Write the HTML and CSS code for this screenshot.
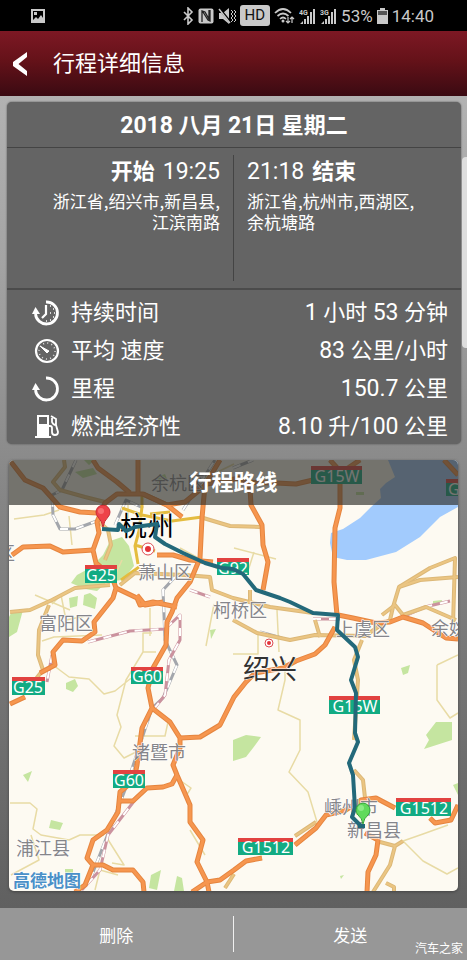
FILE: index.html
```html
<!DOCTYPE html>
<html lang="zh-CN">
<head>
<meta charset="utf-8">
<meta name="viewport" content="width=device-width, initial-scale=1">
<title>行程详细信息</title>
<link rel="stylesheet" href="styles.css">
</head>
<body>
<div class="status">
  <svg class="status-photo" width="16" height="16" viewBox="0 0 16 16"><path fill="#c9c9c9" fill-rule="evenodd" d="M1 1h14v14H1zM3 3v9l3-3 2 2 3-4 2 3V3zM4 4h3v3H4z"/></svg>
  <div class="status-right">
    <svg width="12" height="18" viewBox="0 0 12 18"><path d="M2 5l8 8-4 4V1l4 4-8 8" fill="none" stroke="#c9c9c9" stroke-width="1.6"/></svg>
    <svg width="16" height="16" viewBox="0 0 16 16"><rect x="0.500" y="0.500" width="15" height="15" rx="2" fill="#c9c9c9"/><path d="M4 14V3l3 1 4 7V2M12 2v11l-2-1-5-8" fill="none" stroke="#222" stroke-width="1.300"/></svg>
    <svg width="18" height="18" viewBox="0 0 18 18"><path fill="#c9c9c9" d="M1 6h4l6-5v16l-6-5H1z"/><path d="M1 1l12 15" stroke="#000" stroke-width="2.5"/><path d="M1 2l11 14" stroke="#c9c9c9" stroke-width="1.4"/><path d="M13 3l2 2-2 2 2 2-2 2 2 2-2 2M16 3l2 2-2 2 2 2-2 2 2 2-2 2" fill="none" stroke="#c9c9c9"/></svg>
    <span class="hd">HD</span>
    <svg width="21" height="18" viewBox="0 0 21 18"><g fill="none" stroke="#c9c9c9" stroke-width="1.7"><path d="M1 6q8-8 16 0M3.500 9q5.500-5 11 0M6 12q3-3 6 0"/><path d="M14 10v6m-2-2l2 2 2-2M18 16v-6m-2 2l2-2 2 2" stroke-width="1.200"/></g><circle cx="9" cy="14" r="1.500" fill="#c9c9c9"/></svg>
    <svg width="17" height="18" viewBox="0 0 17 18"><text x="0" y="8" class="net">4G</text><path fill="#c9c9c9" d="M1 17l3-3v3zM5 12h2v5H5zM8 9h2v8H8zM11 5h2v12h-2zM14 2h2v15h-2z"/></svg>
    <svg width="17" height="18" viewBox="0 0 17 18"><text x="0" y="8" class="net">3G</text><path fill="#c9c9c9" d="M1 17l3-3v3zM5 12h2v5H5zM8 9h2v8H8zM11 5h2v12h-2zM14 2h2v15h-2z"/></svg>
    <span>53%</span>
    <svg width="11" height="16" viewBox="0 0 11 16"><path fill="#c9c9c9" d="M3 0h5v2h3v14H0V2h3z"/><path fill="#555" d="M1 3h9v4H1z"/></svg>
    <span>14:40</span>
  </div>
</div>

<header class="header">
  <button class="back" type="button" aria-label="返回"><svg width="18" height="26" viewBox="0 0 18 26"><path d="M15 1v5L6.500 13l8.500 7v5L1 15v-4z" fill="#fff"/></svg></button>
  <h1>行程详细信息</h1>
</header>

<main class="content">
  <section class="card">
    <h2 class="date"><span class="num">2018</span> 八月 <span class="num">21</span>日 星期二</h2>
    <div class="trip">
      <div class="leg leg-start">
        <p class="when"><b>开始</b> <span class="num">19:25</span></p>
        <p>浙江省,绍兴市,新昌县,<br>江滨南路</p>
      </div>
      <div class="leg leg-end">
        <p class="when"><span class="num">21:18</span> <b>结束</b></p>
        <p>浙江省,杭州市,西湖区,<br>余杭塘路</p>
      </div>
    </div>
    <dl class="stats">
      <div class="stat">
        <dt><svg width="28" height="26" viewBox="0 0 28 26"><path d="M14 2a11 11 0 1 1-10.500 12" fill="none" stroke="#fff" stroke-width="2.800"/><path d="M0 14l3.500-7L8 14z" fill="#fff"/><path d="M14 5v9l-4 4" fill="none" stroke="#fff" stroke-width="2.200"/><path d="M18 6h1M21 9h1M22 13h1M21 17h1M18 20h1M14 21h1M18 13h1" stroke="#fff" stroke-width="1.500"/></svg>持续时间</dt>
        <dd><span class="num">1</span> 小时 <span class="num">53</span> 分钟</dd>
      </div>
      <div class="stat">
        <dt><svg width="28" height="26" viewBox="0 0 28 26"><circle cx="15" cy="13" r="11" fill="none" stroke="#fff" stroke-width="2.200"/><circle cx="15" cy="13" r="8" fill="none" stroke="#ddd" stroke-width="1.600" stroke-dasharray="1 3.190"/><path d="M8 8l9 5-2 2z" fill="#fff" stroke="#fff"/></svg>平均 速度</dt>
        <dd><span class="num">83</span> 公里<span class="num">/</span>小时</dd>
      </div>
      <div class="stat">
        <dt><svg width="28" height="26" viewBox="0 0 28 26"><path d="M14 2a11 11 0 1 1-10.500 12" fill="none" stroke="#fff" stroke-width="2.800"/><path d="M0 14l3.500-7L8 14z" fill="#fff"/></svg>里程</dt>
        <dd><span class="num">150.7</span> 公里</dd>
      </div>
      <div class="stat">
        <dt><svg width="28" height="26" viewBox="0 0 28 26"><path fill="#fff" fill-rule="evenodd" d="M5 1h12v21h2v2H3v-2h2zM7 3v7h8V3z"/><path d="M17 12h1q2 0 2 2v4q0 3 3 3t3-3l-2-7V5l-5-3M20 4v4q1 3 4 3" fill="none" stroke="#fff" stroke-width="1.800"/></svg>燃油经济性</dt>
        <dd><span class="num">8.10</span> 升<span class="num">/100</span> 公里</dd>
      </div>
    </dl>
  </section>

  <section class="map">
    <svg class="map-canvas" viewBox="9 460 449 431" role="img" aria-label="行程路线">
      <defs>
        <g id="highways">
          <path d="M11 462L25 480L43 488L60 507L80 512L97 513"/>
          <path d="M93 460L98 468L117 482L130 493M138 460V493"/>
          <path d="M182 517L167 505L143 494H117L105 503L97 522L99 533L93 550L96 563L112 577L116 588L113 598L94 622L95 632L82 641L63 640L53 652L55 665L40 673M25 697L10 704"/>
          <path d="M12 555L23 547L50 546L63 552L93 550"/>
          <path d="M116 588L137 598L140 605L153 602L177 607"/>
          <path d="M220 460L205 485L202 518L200 558L190 582L177 598L172 612L167 622L166 645L153 668L148 688L152 708L142 728L137 765L134 780L120 792L118 812L107 830L93 840L87 858L93 865L85 885L75 892"/>
          <path d="M152 708L170 722L180 738V748L173 765L177 775L190 805V822L203 840L197 862L207 882L209 892"/>
          <path d="M177 775L172 784L163 787L147 788L133 801H120"/>
          <path d="M93 865L103 865L113 870H133L143 882L144 892"/>
          <path d="M180 738L200 737L220 725L234 697L246 682L255 673L283 668L296 661L315 654L325 645L335 627"/>
          <path d="M192 892L207 882L220 880L234 870L246 861L262 858M295 845L316 828L326 815L346 810L361 800L376 798L395 808"/>
          <path d="M430 818L435 823L451 820L458 805M365 833L378 840L376 855L368 872L367 892"/>
          <path d="M330 460L340 471V508L335 528L334 582L337 615M360 460L348 468"/>
          <path d="M143 494L167 505L185 502L207 484L240 478L250 488L251 505L262 525L263 545L268 562L263 590M240 482L276 483L296 484L313 480"/>
          <path d="M157 555H173L190 560L213 562M338 615L353 618L376 623L390 622L403 617L423 623L446 638L458 639"/>
          <path d="M444 460L458 475M137 595L145 605L163 602"/>
        </g>
        <g id="roads">
          <path d="M64 460L65 467L53 482L60 490L85 497L105 502M49 605L39 630L38 655L43 670L35 680"/>
          <path d="M10 612L30 610L52 600L75 588L110 585M105 560L111 545L108 530L97 520"/>
          <path d="M120 585L135 573L185 575L210 577L212 590L233 598L270 607L313 613"/>
          <path d="M233 620L257 633L290 640L315 635L365 636L378 627L390 620L393 607L399 587L430 568L455 558L453 625"/>
          <path d="M399 587L420 580L458 577M382 615L395 605L403 615L426 607L456 620"/>
          <path d="M315 620L320 637M362 640L354 660L358 680L354 740M354 770L363 780L365 798"/>
          <path d="M295 836L316 822M380 842L395 846L390 865L373 892M395 846L403 841M386 883L394 887V892"/>
          <path d="M200 517L230 526L260 527M250 590V602M225 888L234 874"/>
        </g>
        <path id="railgrey" d="M76 460L62 490L52 495L53 515L60 529L75 529L105 518M115 525L126 500L143 508M175 577L163 590L165 640L177 665L163 698L152 708L125 790L90 880M183 510L215 460M260 632L282 638M233 468L253 460"/>
        <path id="railpink" d="M88 642L130 631L165 629L180 615L180 640L169 660L165 695L153 710M190 590L210 597M52 655L47 682M138 796L108 835L100 870L80 892M313 619L340 619M395 620L425 607L450 601"/>
      </defs>
      <path class="land" d="M9 460h449v431H9z"/>
      <g class="green">
        <path d="M103 555l7-14 12-4 7 9 5 20-11 14-16 2-10 9-12-2-14-6 6-8 13-7z"/>
        <path d="M69 598l9-2-1 10-7 2zM84 595l6-2 7 5-2 11-12-4zM11 613l12-3-6 22-8 5v-20zM66 683l9-4 3 7-5 6-7-3zM210 630l6-1-5 10zM23 775l9-4-4 11zM51 820l12 3-3 7-11-2zM151 875l10-5-4 20-8-2zM177 876l5 2 2 13h-10zM65 869h8v4h-8z"/>
        <path d="M233 740l13-5 15 2-8 11-7 9-13 4zM426 735l10-13h16v18l-28 9 5-9zM401 668l9-3-2 8-5 2zM453 785l5-2v12zM340 876l4-1-3 4zM75 472l18-4 4 6-14 4zM356 492h8v3h-8zM157 477l8-3 2 5-10 4zM84 460h11l-6 5zM13 612l8-1zM433 601l9-1-1 5h-8z"/>
      </g>
      <path class="water" d="M388 460L395 477L386 483L380 489L381 498L371 507L360 518L343 529L331 533L330 543L333 557L347 560L366 560L396 552L420 537L440 517L458 507V460z"/>
      <path class="lane" d="M14 519l30-4 15-5M69 516l3 29M52 604l9-9 5 25 24-5M42 641l12-4 48-2M53 665l16 12 20 2 15 15 11-3 15-12 19-4M122 560l-9 20M152 633h-9v19l-17 28-9 35 4 12-7 19 10 12 18-9M143 652l13 0M10 803h20l7 6-4 20 8 6 28 5 11-5h24M31 835l8 25-28 15M107 838l17 27-12-2M95 890l5-20 18 5M135 736h30l3-14M150 608v28M234 548l42 11M254 552l-7 22M258 634v20h-25M277 610l2 42M285 660v20l-7 30 22 10v30l-11 22 19 20 9 30M437 665v35l13 18 8-5M403 841l20 20 24 13 11-6M403 841l20-7 25-9M190 830l15 25M178 779l13 9-5 8M180 548l40 22M35 595l35 15M214 604l-8 42M201 480l33-16M128 505v20M437 665l21-10"/>
      <use href="#railgrey" class="rail-grey"/><use href="#railgrey" class="rail-gap"/>
      <use href="#railpink" class="rail-pink"/><use href="#railpink" class="rail-gap"/>
      <path class="yellow" d="M142 492v15l-3 24-4 15 3 18M122 508l20 7 30 6 30-4M121 580l18-13M150 514l20-2M135 545l20 6"/>
      <use href="#roads" class="road-edge"/><use href="#roads" class="road"/>
      <use href="#highways" class="highway-edge"/><use href="#highways" class="highway"/>
      <g class="place">
        <text x="151" y="490">余杭区</text><text x="138" y="579">萧山区</text><text x="39" y="630">富阳区</text><text x="213" y="617">柯桥区</text><text x="336" y="636">上虞区</text><text x="431" y="635">余姚</text><text x="132" y="759">诸暨市</text><text x="16" y="855">浦江县</text><text x="324" y="814">嵊州市</text><text x="347" y="837">新昌县</text><text x="-3" y="560">区</text>
      </g>
      <text class="city city-main" x="120" y="536">杭州</text><text class="city" x="243" y="679">绍兴</text>
      <g class="spot"><circle cx="148" cy="549" r="6"/><circle cx="269" cy="643" r="4"/></g>
      <g class="spot-core"><circle cx="148" cy="549" r="3"/><circle cx="269" cy="643" r="2"/></g>
      <g class="shield">
        <path d="M85 565h32v18H85zM12 678h33v17H12zM131 667h32v17h-32zM113 770h32v18h-32zM217 558h32v17h-32zM311 466h51v18h-51zM329 696h51v18h-51zM396 798h55v18h-55zM238 838h55v17h-55zM446 479h12v17h-12z"/>
      </g>
      <path class="shield-top" d="M85 565h32v4H85zM12 677h33v4H12zM131 667h32v4h-32zM113 770h32v4h-32zM217 558h32v4h-32zM311 466h51v4h-51zM329 696h51v4h-51zM396 798h55v4h-55zM238 838h55v4h-55zM446 479h12v4h-12z"/>
      <g class="shield-text">
        <text x="101" y="581">G25</text><text x="28" y="693">G25</text><text x="147" y="682">G60</text><text x="129" y="786">G60</text><text x="233" y="574">G92</text><text x="337" y="482">G15W</text><text x="355" y="712">G15W</text><text x="424" y="814">G1512</text><text x="266" y="853">G1512</text><text x="463" y="495">G92</text>
      </g>
      <path class="route" d="M102 529L118 530L119 524L126 531L135 527L157 524L155 537L165 544L183 553L205 563L222 568L233 569L243 574L256 590L280 598L290 602L313 613L338 615L337 630L355 647L358 657L351 680L356 693L355 733L358 742L349 763L353 775L355 808L352 817L361 826"/>
      <path d="M358 824h7v4h-7z" fill="#1f6878"/>
      <path d="M103 527q-1-6-5-10a7 7 0 1 1 10 0q-4 4-5 10z" fill="#ee4248" stroke="#c92c35"/>
      <circle cx="101" cy="511" r="3" fill="#ff8c8c" opacity=".6"/>
      <path d="M363 824q-1-6-5-9a7 7 0 1 1 10 0q-4 3-5 9z" fill="#61da5c" stroke="#37a43a"/>
      <circle cx="361" cy="808" r="3" fill="#a9f5a2" opacity=".6"/>
      <text class="brand" x="13" y="887">高德地图</text>
    </svg>
    <h2 class="map-title">行程路线</h2>
  </section>
  <span class="scrollbar"></span>
</main>

<footer class="footer">
  <button type="button">删除</button>
  <button type="button">发送</button>
  <span class="watermark">汽车之家</span>
</footer>
</body>
</html>
```
FILE: styles.css
```css
* { box-sizing: border-box; }

body {
  margin: 0;
  min-height: 100vh;
  display: flex;
  flex-direction: column;
  font-family: Roboto, "Noto Sans CJK SC", sans-serif;
  font-size: 22px;
  color: #fff;
  background: #777;
}

h1, h2, p, dl, dd { margin: 0; }

svg { display: block; flex: none; }

button {
  padding: 0;
  border: 0;
  background: none;
  color: inherit;
  font: inherit;
}

.status {
  height: 31px;
  padding: 0 33px 0 30px;
  display: flex;
  align-items: center;
  justify-content: space-between;
  background: #000;
  color: #c9c9c9;
  font-size: 17px;
}

.status-right {
  display: flex;
  align-items: center;
  gap: 4px;
}

.hd {
  padding: 0 5px;
  border-radius: 3px;
  background: #c9c9c9;
  color: #111;
  font-size: 15px;
  line-height: 21px;
}

.net {
  font: bold 7px Roboto, sans-serif;
  fill: #c9c9c9;
}

.header {
  height: 65px;
  padding-left: 12px;
  display: flex;
  align-items: center;
  gap: 23px;
  background: linear-gradient(#7d1824, #651219 45%, #3a0a12);
}

.header h1 {
  font-size: 22px;
  font-weight: 400;
  line-height: 30px;
}

.content {
  position: relative;
  flex: 1;
  padding: 6px 6px 17px 7px;
  background: linear-gradient(#b2b2b2, #a4a4a4 20%, #858585 50%, #606060);
}

.card {
  border-radius: 5px;
  background: #646464;
  box-shadow: 0 0 2px #4a4a4a;
}

.num { font-size: 23px; }

.date {
  height: 46px;
  border-bottom: 1px solid #444;
  font-size: 22px;
  line-height: 48px;
  text-align: center;
}

.trip {
  display: grid;
  grid-template-columns: 1fr 1fr;
  height: 140px;
  padding: 7px 0;
  font-family: "Noto Sans CJK SC", sans-serif;
  font-size: 17px;
  line-height: 21px;
}

.leg { padding: 0 13px; }

.leg-start {
  border-right: 1px solid #444;
  text-align: right;
}

.leg-start .when { justify-content: flex-end; }

.when {
  display: flex;
  gap: 8px;
  margin-bottom: 1px;
  font-family: Roboto, "Noto Sans CJK SC", sans-serif;
  font-size: 22px;
  line-height: 34px;
}

.stats {
  display: grid;
  gap: 8px;
  padding: 8px 13px 2px 25px;
  border-top: 2px solid #4b4b4b;
}

.stat {
  display: flex;
  justify-content: space-between;
  line-height: 30px;
}

.stat dt {
  display: flex;
  align-items: center;
  gap: 11px;
}

.map {
  position: relative;
  margin: 16px 3px 0 2px;
  overflow: hidden;
  border-radius: 5px;
  box-shadow: 0 1px 3px #444;
}

.map-canvas {
  width: 100%;
  height: auto;
}

.map-title {
  position: absolute;
  inset: 0 0 auto;
  background: rgba(50, 50, 45, .68);
  font-size: 22px;
  line-height: 45px;
  text-align: center;
}

.land { fill: #fdfaf2; }
.green { fill: #c5e5a0; }
.water { fill: #a2cbfd; }

.lane, .yellow, .road, .road-edge, .highway, .highway-edge,
.rail-grey, .rail-pink, .rail-gap, .route {
  fill: none;
  stroke-linejoin: round;
}

.lane { stroke: #e8dba5; stroke-width: 1.5; }
.yellow { stroke: #e4bc3f; stroke-width: 3; }
.road-edge { stroke: #dcb878; stroke-width: 4; }
.road { stroke: #ebc582; stroke-width: 2; }
.highway-edge { stroke: #e5853f; stroke-width: 5; }
.highway { stroke: #f6964f; stroke-width: 3; }
.rail-grey { stroke: #a3a6ac; stroke-width: 3; }
.rail-pink { stroke: #cb929e; stroke-width: 3; }
.rail-gap { stroke: #fff; stroke-width: 2; stroke-dasharray: 8 8; }
.route { stroke: #23697a; stroke-width: 4; }

.place {
  font-size: 18px;
  fill: #85858a;
}

.place, .city, .brand {
  stroke: #fff;
  stroke-width: 1px;
  paint-order: stroke;
}

.city {
  font-size: 27px;
  fill: #333;
}

.city-main { fill: #000; }

.spot { fill: #fff; stroke: #dd4a50; }
.spot-core { fill: #e43238; }

.shield { fill: #12ab83; }
.shield-top { fill: #e14240; }

.shield-text {
  font-family: "Noto Sans", sans-serif;
  font-size: 16px;
  fill: #fff;
  text-anchor: middle;
}

.brand {
  font-size: 17px;
  font-weight: 700;
  fill: #4a90c8;
}

.scrollbar {
  position: absolute;
  top: 61px;
  right: 0;
  width: 5px;
  height: 191px;
  border-radius: 4px 0 0 4px;
  background: #dedede;
}

.footer {
  position: relative;
  display: grid;
  grid-template-columns: 1fr 1fr;
  padding: 8px 0;
  background: #979797;
  font-size: 17px;
}

.footer button { height: 36px; }

.footer button:first-child { border-right: 1px solid #f0f0f0; }

.watermark {
  position: absolute;
  right: 4px;
  bottom: 2px;
  font-size: 12px;
  line-height: 18px;
}
```
